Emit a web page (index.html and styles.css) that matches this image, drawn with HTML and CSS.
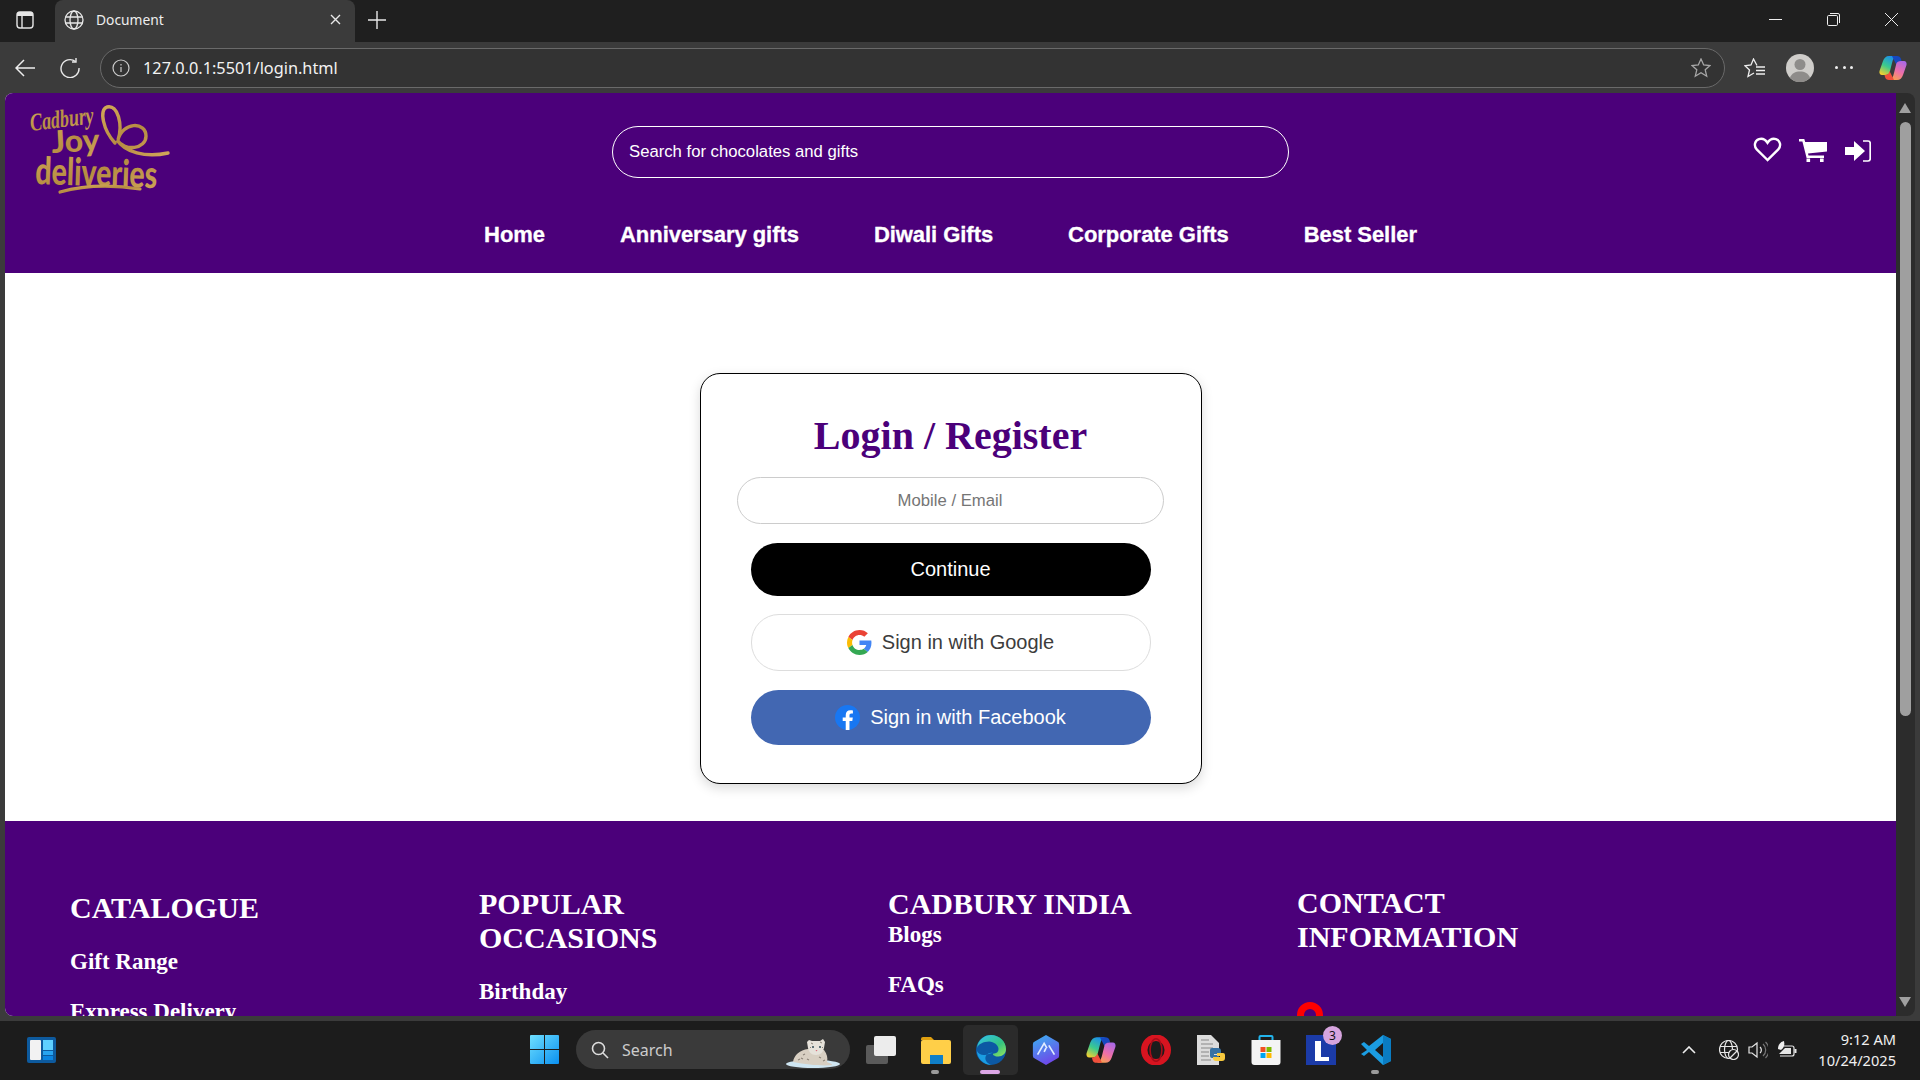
FILE: index.html
```html
<!DOCTYPE html>
<html lang="en">
<head>
    <meta charset="UTF-8">
    <meta name="viewport" content="width=device-width, initial-scale=1.0">
    <title>Document</title>
    <link rel="stylesheet" href="styles.css">
</head>
<body>

    <!-- browser tabs -->
    <div class="tabstrip">
        <svg class="tab-side" viewBox="0 0 18 18"><rect x="1" y="1" width="16" height="16" rx="3" fill="none" stroke="#e6e6e6" stroke-width="1.4"/><path d="M1 4a3 3 0 0 1 3-3h10a3 3 0 0 1 3 3v1H1z" fill="#e6e6e6"/><path d="M6 5v12" stroke="#e6e6e6" stroke-width="1.4"/></svg>
        <div class="tab">
            <svg class="tab-globe" viewBox="0 0 20 20" fill="none" stroke="#e8e8e8" stroke-width="1.3"><circle cx="10" cy="10" r="9"/><ellipse cx="10" cy="10" rx="4" ry="9"/><path d="M1.5 7h17M1.5 13h17"/></svg>
            <span class="tab-title">Document</span>
            <svg class="tab-close" viewBox="0 0 11 11" stroke="#e8e8e8" stroke-width="1.4"><path d="M1 1l9 9M10 1l-9 9"/></svg>
        </div>
        <svg class="tab-new" viewBox="0 0 18 18" stroke="#e8e8e8" stroke-width="1.4"><path d="M9 0v18M0 9h18"/></svg>
        <div class="window-btns">
            <svg class="win-min" viewBox="0 0 13 1"><path d="M0 .5h13" stroke="#eee"/></svg>
            <svg class="win-max" viewBox="0 0 13 13" fill="none" stroke="#eee"><rect x=".5" y="2.5" width="10" height="10" rx="1.2"/><path d="M3 .5h8a1.5 1.5 0 0 1 1.5 1.5v8"/></svg>
            <svg class="win-close" viewBox="0 0 13 13" stroke="#eee"><path d="M0 0l13 13M13 0L0 13"/></svg>
        </div>
    </div>

    <!-- address bar -->
    <div class="toolbar">
        <svg class="tool-back" viewBox="0 0 20 18" fill="none" stroke="#eee" stroke-width="1.5"><path d="M20 9H1M9 1L1 9l8 8"/></svg>
        <svg class="tool-reload" viewBox="0 0 20 20" fill="none" stroke="#e8e8e8" stroke-width="1.4"><path d="M15.5 3.5A9 9 0 1 0 19 10"/><path d="M16 0v4h-4"/></svg>
        <div class="address">
            <svg class="addr-info" viewBox="0 0 18 18" fill="none" stroke="#ccc" stroke-width="1.2"><circle cx="9" cy="9" r="8"/><path d="M9 8v5M9 5v1.4"/></svg>
            <span class="addr-url">127.0.0.1:5501/login.html</span>
            <svg class="addr-star" viewBox="0 0 20 20" fill="none" stroke="#a8a8a8" stroke-width="1.3"><path d="M10 1l2.7 6 6.3.6-4.8 4.2 1.5 6.4-5.7-3.4-5.7 3.4 1.5-6.4L1 7.6 7.300 7z"/></svg>
        </div>
        <svg class="tool-fav" viewBox="0 0 21 20" fill="none" stroke="#eee" stroke-width="1.3"><path d="M13 7.500L9.500 1 7 7l-6 .8 4.500 4.200L4 18.500l6-3.500"/><path d="M12 9h9M12 12.500h9M12 16h9"/></svg>
        <svg class="tool-avatar" viewBox="0 0 28 28"><circle cx="14" cy="14" r="14" fill="#cfcdca"/><circle cx="14" cy="10.500" r="5.500" fill="#8e8c8a"/><path d="M4 24c1.500-5 5.500-6.500 10-6.500S22.500 19 24 24a14 14 0 0 1-20 0z" fill="#8e8c8a"/></svg>
        <span class="tool-dots"><i></i><i></i><i></i></span>
        <svg class="tool-copilot" viewBox="0 0 28 26">
            <defs>
                <linearGradient id="copA" x1=".7" y1="0" x2=".2" y2="1"><stop offset="0" stop-color="#1a8cf0"/><stop offset=".55" stop-color="#3ccb8c"/><stop offset="1" stop-color="#f4d030"/></linearGradient>
                <linearGradient id="copB" x1=".8" y1="0" x2=".3" y2="1"><stop offset="0" stop-color="#a868e8"/><stop offset=".55" stop-color="#ee6fa8"/><stop offset="1" stop-color="#f8a050"/></linearGradient>
            </defs>
            <path d="M10 1h8C15 2 14 4 13 8l-2 8c-.5 3-2 4-5 4H3c-2 0-3-2-2.500-4L4 6c1-3 3-5 6-5z" fill="url(#copA)"/>
            <path d="M13 1h5c2 0 3.500 1 4 3l.5 2c-3 0-4.500 1-5 4z" fill="#1648c0"/>
            <path d="M18 25h-8c3-1 4-3 5-7l2-8c.5-3 2-4 5-4h3c2 0 3 2 2.500 4L24 20c-1 3-3 5-6 5z" fill="url(#copB)"/>
            <path d="M15 25h-5c-2 0-3.500-1-4-3L5.500 20c3 0 4.500-1 5-4z" fill="#f0503c"/>
        </svg>
    </div>

    <div class="browser-body">
        <div class="page">

            <header class="site-header">
                <div class="header-top">
                    <!-- coordinates are px from the corner of the window, y less 90 -->
                    <svg class="logo" viewBox="30 15 142 90">
                        <defs>
                            <linearGradient id="gold" x1="0" y1="0" x2="1" y2="1"><stop offset="0" stop-color="#d2a857"/><stop offset=".5" stop-color="#b68c42"/><stop offset="1" stop-color="#d0a65a"/></linearGradient>
                        </defs>
                        <text x="31" y="41" class="logo-cad" textLength="64" lengthAdjust="spacingAndGlyphs" transform="rotate(-7 31 41)">Cadbury</text>
                        <text x="52" y="63" class="logo-joy" textLength="48" lengthAdjust="spacingAndGlyphs" transform="rotate(-3 52 63)">Joy</text>
                        <text x="35" y="94" class="logo-del" textLength="122" lengthAdjust="spacingAndGlyphs" transform="rotate(2 35 94)">deliveries</text>
                        <g fill="none" stroke="url(#gold)" stroke-linecap="round">
                            <path d="M115 53C103 40 99 20 107 17C118 14 123 35 118 50C122 32 146 31 146 46C146 59 125 62 117 50C125 62 145 68 168 63" stroke-width="3.400"/>
                            <path d="M60 102C85 95 115 95 140 99" stroke-width="3.200"/>
                        </g>
                    </svg>
                    <input class="search" type="text" placeholder="Search for chocolates and gifts">
                    <div class="header-icons">
                        <svg class="icon-heart" viewBox="0 0 29 25" fill="none" stroke="#fff" stroke-width="2.400"><path d="M14.500 23L3.700 12.300C.7 9.200 1.500 3.500 6 2.100c3.200-.9 6.500.6 8.500 3.700 2-3.100 5.300-4.600 8.500-3.700 4.500 1.400 5.300 7.100 2.300 10.200z"/></svg>
                        <svg class="icon-cart" viewBox="0 0 28 23" fill="#fff"><path d="M0 0h5.300l.9 3H28v9.500L9 14.500l.5 2H25V19H7.600L3.400 2.500H0z"/><rect x="7.500" y="19.500" width="3.600" height="3.500"/><rect x="21" y="19.500" width="3.600" height="3.500"/></svg>
                        <svg class="icon-signin" viewBox="0 0 26 22"><path d="M0 7h9V1l11 10L9 21v-6H0z" fill="#fff"/><path d="M18 1h5a2.200 2.200 0 0 1 2.200 2.200v15.600A2.200 2.200 0 0 1 23 21h-5" fill="none" stroke="#fff" stroke-width="1.700"/></svg>
                    </div>
                </div>
                <nav class="site-nav">
                    <a href="#">Home</a>
                    <a href="#">Anniversary gifts</a>
                    <a href="#">Diwali Gifts</a>
                    <a href="#">Corporate Gifts</a>
                    <a href="#">Best Seller</a>
                </nav>
            </header>

            <main class="login-area">
                <form class="login-card">
                    <h2>Login / Register</h2>
                    <input class="login-input" type="text" placeholder="Mobile / Email">
                    <button class="btn btn-continue" type="button">Continue</button>
                    <button class="btn btn-google" type="button">
                        <svg class="btn-icon" viewBox="0 0 48 48">
                            <path fill="#EA4335" d="M24 9.500c3.540 0 6.710 1.220 9.210 3.600l6.850-6.850C35.900 2.380 30.470 0 24 0 14.620 0 6.510 5.380 2.560 13.220l7.980 6.190C12.430 13.720 17.740 9.500 24 9.500z"/>
                            <path fill="#4285F4" d="M46.980 24.550c0-1.570-.15-3.090-.38-4.550H24v9.020h12.940c-.58 2.960-2.260 5.480-4.780 7.180l7.730 6c4.510-4.180 7.090-10.360 7.090-17.650z"/>
                            <path fill="#FBBC05" d="M10.530 28.590c-.48-1.450-.76-2.990-.76-4.590s.27-3.140.76-4.590l-7.980-6.190C.92 16.460 0 20.120 0 24c0 3.880.92 7.540 2.560 10.780l7.970-6.190z"/>
                            <path fill="#34A853" d="M24 48c6.480 0 11.930-2.130 15.890-5.810l-7.730-6c-2.150 1.450-4.920 2.300-8.160 2.300-6.260 0-11.570-4.220-13.470-9.910l-7.980 6.190C6.510 42.620 14.620 48 24 48z"/>
                        </svg>
                        Sign in with Google
                    </button>
                    <button class="btn btn-facebook" type="button">
                        <svg class="btn-icon" viewBox="0 0 24 24"><circle cx="12" cy="12" r="12" fill="#1877f2"/><path d="M16.600 15.300l.5-3.300h-3.200V9.900c0-.9.400-1.800 1.900-1.800h1.400V5.300s-1.300-.2-2.600-.2c-2.600 0-4.300 1.600-4.300 4.400V12H7.400v3.300h2.900V24h3.600v-8.700z" fill="#fff"/></svg>
                        Sign in with Facebook
                    </button>
                </form>
            </main>

            <footer class="site-footer">
                <div class="footer-col col-catalogue">
                    <h3>CATALOGUE</h3>
                    <a href="#">Gift Range</a>
                    <a href="#">Express Delivery</a>
                </div>
                <div class="footer-col col-occasions">
                    <h3>POPULAR OCCASIONS</h3>
                    <a href="#">Birthday</a>
                </div>
                <div class="footer-col col-india">
                    <h3>CADBURY INDIA</h3>
                    <a href="#">Blogs</a>
                    <a href="#">FAQs</a>
                </div>
                <div class="footer-col col-contact">
                    <h3>CONTACT INFORMATION</h3>
                    <svg class="contact-pin" viewBox="0 0 26 26" fill="none" stroke="#f00" stroke-width="7"><circle cx="13" cy="13" r="9.500"/></svg>
                </div>
            </footer>

        </div>
        <div class="scrollbar">
            <span class="scroll-up"></span>
            <span class="scroll-thumb"></span>
            <span class="scroll-down"></span>
        </div>
    </div>

    <!-- windows taskbar -->
    <div class="taskbar">
        <svg class="task-widget" viewBox="0 0 29 26"><rect width="29" height="26" rx="2" fill="#0d5a9e"/><rect x="3" y="3" width="11" height="20" rx="1" fill="#f2f2f2"/><rect x="16" y="3" width="10" height="10" fill="#5fd0ff"/><rect x="16" y="14" width="10" height="4" fill="#27a4f0"/><rect x="16" y="19" width="10" height="4" fill="#0a84e0"/></svg>
        <svg class="task-start" viewBox="0 0 29 29"><defs><linearGradient id="winG" x1="0" y1="0" x2="1" y2="1"><stop offset="0" stop-color="#6fe0ff"/><stop offset="1" stop-color="#0a90f0"/></linearGradient></defs><path d="M1 0h13v14H0V1a1 1 0 0 1 1-1zM15 0h13a1 1 0 0 1 1 1v13H15zM0 15h14v14H1a1 1 0 0 1-1-1zM15 15h14v13a1 1 0 0 1-1 1H15z" fill="url(#winG)"/></svg>
        <div class="task-search">
            <svg class="task-search-icon" viewBox="0 0 18 18" fill="none" stroke="#ddd" stroke-width="1.600"><circle cx="7.500" cy="7.500" r="6"/><path d="M12 12l5 5"/></svg>
            <span>Search</span>
            <svg class="task-leopard" viewBox="0 0 56 32">
                <ellipse cx="28" cy="27" rx="27" ry="4" fill="#cfe6f2"/>
                <path d="M8 25c1-7 7-12 15-13l16 1c3 4 4 8 3 12 2 1 6 2 5 3-8 1-24 0-39-3z" fill="#d8cfc2"/>
                <path d="M13 23l2-1M18 18l2-1M16 21l2 1M34 20l2 1M38 24l2-1M22 22l2 1" stroke="#8d8478" stroke-width="1.200"/>
                <path d="M24 3l3 1h8l3-2 2 3-1 6c-1 4-3 7-8 7s-7-3-8-7l-1-6z" fill="#e6e2da"/>
                <path d="M26 6l2 1M35 5l2 1M25 10l1 1M38 10l-1 1" stroke="#8d8478" stroke-width="1"/>
                <circle cx="28" cy="10" r="1.100" fill="#3c5560"/><circle cx="35" cy="10" r="1.100" fill="#3c5560"/>
                <path d="M30.500 13h2l-1 1.500z" fill="#d86a78"/>
            </svg>
        </div>
        <div class="task-apps">
            <div class="task-app"><svg viewBox="0 0 30 28"><rect x="0" y="9" width="22" height="19" rx="2" fill="#5a5a5a"/><rect x="8" y="0" width="22" height="20" rx="2" fill="#ececec"/></svg></div>
            <div class="task-app app-running"><svg viewBox="0 0 30 28"><path d="M0 3a2 2 0 0 1 2-2h8l3 3h-13z" fill="#e0a010"/><rect x="0" y="4" width="30" height="24" rx="2" fill="#ffcf48"/><rect x="9" y="19" width="13" height="9" fill="#0f7fc8"/></svg></div>
            <div class="task-app app-active"><svg viewBox="0 0 32 32"><defs><linearGradient id="edgeG" x1="0" y1="0" x2="1" y2="1"><stop offset="0" stop-color="#35c1f1"/><stop offset=".6" stop-color="#33c481"/><stop offset="1" stop-color="#9ae65c"/></linearGradient></defs><circle cx="16" cy="16" r="16" fill="#0c59a4"/><path d="M1 14C2 5 9 0 16 0c9 0 16 7 16 15 0 5-4 8-8 8-3 0-6-1-6-3 4 0 6-2 6-5 0-4-5-8-10-8-6 0-12 3-13 7z" fill="url(#edgeG)"/><path d="M18 19c-5 0-8 2-8 6 0 3 3 6 7 7-9 0-16-7-16-15 2 4 6 5 10 4z" fill="#1b9de2"/></svg></div>
            <div class="task-app"><svg viewBox="0 0 28 32"><defs><linearGradient id="aimG" x1=".3" y1="0" x2=".7" y2="1"><stop offset="0" stop-color="#3fa8f0"/><stop offset="1" stop-color="#7240e8"/></linearGradient></defs><path d="M14 0l12 7a3 3 0 0 1 2 3v12a3 3 0 0 1-2 3l-12 7-12-7a3 3 0 0 1-2-3V10a3 3 0 0 1 2-3z" fill="url(#aimG)"/><path d="M5 21l7-12 3 5M17 11l6 10M12 18l2-4" fill="none" stroke="#e0ecff" stroke-width="1.800"/></svg></div>
            <div class="task-app"><svg viewBox="0 0 28 26"><path d="M10 1h8C15 2 14 4 13 8l-2 8c-.5 3-2 4-5 4H3c-2 0-3-2-2.500-4L4 6c1-3 3-5 6-5z" fill="url(#copA)"/><path d="M13 1h5c2 0 3.500 1 4 3l.5 2c-3 0-4.500 1-5 4z" fill="#1648c0"/><path d="M18 25h-8c3-1 4-3 5-7l2-8c.5-3 2-4 5-4h3c2 0 3 2 2.500 4L24 20c-1 3-3 5-6 5z" fill="url(#copB)"/><path d="M15 25h-5c-2 0-3.500-1-4-3L5.500 20c3 0 4.500-1 5-4z" fill="#f0503c"/></svg></div>
            <div class="task-app"><svg viewBox="0 0 28 28"><ellipse cx="14" cy="14" rx="11" ry="11.500" fill="none" stroke="#d81420" stroke-width="6"/><ellipse cx="14" cy="14" rx="5.500" ry="10.500" fill="none" stroke="#a80c18" stroke-width="1.500"/></svg></div>
            <div class="task-app"><svg viewBox="0 0 28 30"><path d="M0 0h14l8 8v22H0z" fill="#dcdcdc"/><path d="M4 5h8M4 9h12M4 13h12M4 17h8M4 21h8M4 25h10" stroke="#888" stroke-width="1.200"/><path d="M15 13h6a3 3 0 0 1 3 3v3h-7v1h5v3h-7a2 2 0 0 1-2-2v-6a2 2 0 0 1 2-2z" fill="#3772a4"/><path d="M28 20v3a3 3 0 0 1-3 3h-6a3 3 0 0 1-3-3v-1h7v-1h-3v-3h6a2 2 0 0 1 2 2z" fill="#f7c93e"/></svg></div>
            <div class="task-app"><svg viewBox="0 0 29 30"><path d="M8 6V2a1 1 0 0 1 1-1h11a1 1 0 0 1 1 1v4" fill="none" stroke="#22b4ec" stroke-width="2"/><path d="M0 5h29v22a3 3 0 0 1-3 3H3a3 3 0 0 1-3-3z" fill="#f4f4f4"/><rect x="9" y="12" width="5" height="5" fill="#f25022"/><rect x="15" y="12" width="5" height="5" fill="#7fba00"/><rect x="9" y="18" width="5" height="5" fill="#00a4ef"/><rect x="15" y="18" width="5" height="5" fill="#ffb900"/></svg></div>
            <div class="task-app app-badged"><svg viewBox="0 0 30 30"><rect width="30" height="30" fill="#1b3ba8"/><path d="M9 6h6v16h8v4H9z" fill="#fff"/></svg><span class="task-badge">3</span></div>
            <div class="task-app app-running"><svg viewBox="0 0 30 30"><path d="M22 0l8 4v22l-8 4L8 17l-5 4-3-2 6-4-6-6 3-2 5 4zm0 8l-8 7 8 7z" fill="#1b9de2"/><path d="M22 0l8 4v22l-8 4z" fill="#0a7cc2"/></svg></div>
        </div>
        <div class="tray">
            <svg class="tray-chevron" viewBox="0 0 14 8" fill="none" stroke="#eee" stroke-width="1.600"><path d="M1 7l6-6 6 6"/></svg>
            <svg class="tray-icon" viewBox="0 0 20 20" fill="none" stroke="#e6e6e6" stroke-width="1.200"><circle cx="9.500" cy="9.500" r="9"/><ellipse cx="9.500" cy="9.500" rx="4" ry="9"/><path d="M1 6.500h17M1 12.500h17"/><circle cx="14.500" cy="14.500" r="5" fill="#1c1c1c"/><path d="M11 18l7-7"/></svg>
            <svg class="tray-icon" viewBox="0 0 20 20" fill="none" stroke="#e6e6e6" stroke-width="1.200"><path d="M1 7v6h3l5 4V3L4 7z"/><path d="M12 7a4 4 0 0 1 0 6"/><path d="M15 4a8 8 0 0 1 0 12M17.500 2a11 11 0 0 1 0 16" stroke="#777"/></svg>
            <svg class="tray-icon" viewBox="0 0 20 20"><path d="M1 9c0-4 2-7 6-8 1 4 0 7-3 9z" fill="#eee"/><path d="M7 6h8a2 2 0 0 1 2 2v6a2 2 0 0 1-2 2H3" fill="none" stroke="#e6e6e6" stroke-width="1.200"/><path d="M8 8h6v6H2z" fill="#e6e6e6"/><path d="M17.500 9h2v4h-2" fill="#e6e6e6"/></svg>
            <div class="tray-clock"><span>9:12 AM</span><span>10/24/2025</span></div>
        </div>
    </div>

</body>
</html>
```

FILE: styles.css
```css
body {
    margin: 0;
    width: 1920px;
    height: 1080px;
    overflow: hidden;
    display: flex;
    flex-direction: column;
    background-color: #3b3b3b;
    font-family: "Liberation Sans", Arial, sans-serif;
}

svg {
    display: block;
    flex-shrink: 0;
}

/* browser tabs */
.tabstrip {
    height: 42px;
    display: flex;
    align-items: center;
    background-color: #1f1f1f;
}

.tab-side {
    width: 18px;
    height: 18px;
    margin: 0 0 3px 16px;
}

.tab {
    width: 300px;
    height: 42px;
    margin-left: 21px;
    padding: 0 14px 3px 9px;
    box-sizing: border-box;
    display: flex;
    align-items: center;
    background-color: #3b3b3b;
    border-radius: 8px 8px 0 0;
}

.tab-globe {
    width: 20px;
    height: 20px;
}

.tab-title {
    margin-left: 12px;
    flex: 1;
    color: #eee;
    font-family: "Noto Sans", sans-serif;
    font-size: 13.8px;
}

.tab-close {
    width: 11px;
    height: 11px;
}

.tab-new {
    width: 18px;
    height: 18px;
    margin: 0 0 3px 13px;
}

.window-btns {
    margin: 0 0 3px auto;
    display: flex;
    align-items: center;
}

.win-min {
    width: 13px;
    height: 1px;
    margin-right: 45px;
}

.win-max {
    width: 13px;
    height: 13px;
    margin-right: 45px;
}

.win-close {
    width: 13px;
    height: 13px;
    margin-right: 22px;
}

/* address bar */
.toolbar {
    height: 51px;
    display: flex;
    align-items: center;
    background-color: #3b3b3b;
}

.tool-back {
    width: 20px;
    height: 18px;
    margin-left: 15px;
}

.tool-reload {
    width: 20px;
    height: 20px;
    margin-left: 25px;
}

.address {
    width: 1625px;
    height: 40px;
    margin-left: 20px;
    padding: 0 13px 0 11px;
    box-sizing: border-box;
    display: flex;
    align-items: center;
    background-color: #333;
    border: 1px solid #6a6a6a;
    border-radius: 20px;
}

.addr-info {
    width: 18px;
    height: 18px;
}

.addr-url {
    margin-left: 13px;
    flex: 1;
    color: #f2f2f2;
    font-family: "Noto Sans", sans-serif;
    font-size: 16.3px;
}

.addr-star {
    width: 20px;
    height: 20px;
}

.tool-fav {
    width: 21px;
    height: 20px;
    margin-left: 19px;
}

.tool-avatar {
    width: 28px;
    height: 28px;
    margin-left: 21px;
}

.tool-dots {
    width: 18px;
    margin-left: 21px;
    display: flex;
    justify-content: space-between;
}

.tool-dots i {
    width: 3px;
    height: 3px;
    background-color: #eee;
    border-radius: 50%;
}

.tool-copilot {
    width: 28px;
    height: 26px;
    margin-left: 26px;
}

/* page inside the browser */
.browser-body {
    height: 923px;
    margin: 0 5px;
    display: flex;
}

.page {
    flex: 1;
    overflow: hidden;
    background-color: #fff;
    border-radius: 8px 0 0 8px;
}

.scrollbar {
    width: 19px;
    position: relative;
    background-color: #2c2c2c;
    border-radius: 0 8px 8px 0;
}

.scroll-up,
.scroll-down,
.scroll-thumb {
    position: absolute;
}

.scroll-up {
    top: 10px;
    left: 3px;
    border: solid transparent;
    border-width: 0 6.5px 10px;
    border-bottom-color: #a0a0a0;
}

.scroll-thumb {
    top: 29px;
    left: 4px;
    width: 11px;
    height: 594px;
    background-color: #9f9f9f;
    border-radius: 6px;
}

.scroll-down {
    bottom: 9px;
    left: 3px;
    border: solid transparent;
    border-width: 10px 6.5px 0;
    border-top-color: #a0a0a0;
}

.site-header {
    height: 180px;
    background-color: #4b007a;
}

.header-top {
    height: 107px;
    padding: 12px 25px 0;
    box-sizing: border-box;
    display: grid;
    grid-template-columns: 1fr 677px 1fr;
    align-items: start;
}

.logo {
    width: 142px;
    height: 90px;
    overflow: visible;
}

.logo-cad,
.logo-joy,
.logo-del {
    fill: url(#gold);
    font-weight: bold;
}

.logo-cad {
    font-family: "Liberation Serif", serif;
    font-style: italic;
    font-size: 25px;
}

.logo-joy {
    font-family: Lato, sans-serif;
    font-size: 31px;
    font-weight: 900;
}

.logo-del {
    font-family: Lato, sans-serif;
    font-size: 38px;
    font-weight: 900;
}

.search {
    height: 52px;
    margin-top: 21px;
    padding: 0 16px;
    box-sizing: border-box;
    color: #fff;
    font-family: "Liberation Sans", Arial, sans-serif;
    font-size: 16.7px;
    background: transparent;
    border: 1px solid #fff;
    border-radius: 26px;
    outline: none;
}

.search::placeholder {
    color: #fff;
    opacity: 1;
}

.header-icons {
    margin-top: 32px;
    display: flex;
    justify-content: flex-end;
    align-items: flex-start;
}

.icon-heart {
    width: 29px;
    height: 25px;
    margin-right: 17px;
}

.icon-cart {
    width: 28px;
    height: 23px;
    margin: 2px 18px 0 0;
}

.icon-signin {
    width: 26px;
    height: 22px;
    margin-top: 3px;
}

.site-nav {
    display: flex;
    justify-content: center;
    gap: 75px;
    padding-top: 22px;
}

.site-nav a {
    color: #fff;
    font-size: 22px;
    font-weight: bold;
    letter-spacing: -.05px;
    text-decoration: none;
    -webkit-text-stroke: .3px #fff;
}

/* login form */
.login-area {
    height: 548px;
    padding-top: 100px;
    box-sizing: border-box;
    display: flex;
    justify-content: center;
    align-items: flex-start;
}

.login-card {
    width: 502px;
    height: 411px;
    box-sizing: border-box;
    padding-top: 38px;
    display: flex;
    flex-direction: column;
    align-items: center;
    background-color: #fff;
    border: 1px solid #000;
    border-radius: 20px;
    box-shadow: 0 4px 12px rgba(0, 0, 0, 0.15);
}

.login-card h2 {
    margin: 0 0 18px;
    color: #4b007a;
    font-family: "Liberation Serif", serif;
    font-size: 40px;
    font-weight: bold;
}

.login-input {
    width: 427px;
    height: 47px;
    margin: 0 1px 19px 0;
    box-sizing: border-box;
    font-family: "Liberation Sans", Arial, sans-serif;
    font-size: 16.7px;
    text-align: center;
    border: 1px solid #ccc;
    border-radius: 24px;
    outline: none;
}

.login-input::placeholder {
    color: #757575;
}

.btn {
    width: 400px;
    display: flex;
    justify-content: center;
    align-items: center;
    gap: 10px;
    padding: 0;
    font-family: "Liberation Sans", Arial, sans-serif;
    font-size: 20px;
    border: none;
    border-radius: 28px;
}

.btn-icon {
    width: 25px;
    height: 25px;
}

.btn-continue {
    height: 53px;
    margin-bottom: 18px;
    color: #fff;
    background-color: #000;
}

.btn-google {
    height: 57px;
    margin-bottom: 19px;
    color: #3c3c3c;
    background-color: #fff;
    border: 1px solid #ddd;
}

.btn-facebook {
    height: 55px;
    color: #fff;
    background-color: #4267b2;
}

/* footer, cut off by the window */
.site-footer {
    height: 300px;
    padding-left: 65px;
    display: grid;
    grid-template-columns: repeat(4, 409px);
    color: #fff;
    background-color: #4b007a;
    font-family: "Liberation Serif", serif;
}

.footer-col h3 {
    width: 330px;
    margin: 0 0 24px;
    font-size: 30px;
    font-weight: bold;
}

.footer-col a {
    display: block;
    margin-bottom: 24px;
    color: #fff;
    font-size: 23px;
    font-weight: bold;
    text-decoration: none;
}

.col-catalogue {
    padding-top: 70px;
}

.col-occasions {
    padding-top: 66px;
}

.col-india {
    padding-top: 66px;
}

.col-india h3 {
    margin-bottom: 1px;
}

.col-contact {
    padding-top: 65px;
}

.contact-pin {
    width: 26px;
    height: 26px;
    margin-top: 48px;
}

/* windows taskbar */
.taskbar {
    height: 59px;
    margin-top: 5px;
    padding-bottom: 2px;
    box-sizing: border-box;
    display: flex;
    align-items: center;
    background-color: #1c1c1c;
}

.task-widget {
    width: 29px;
    height: 26px;
    margin-left: 27px;
}

.task-start {
    width: 29px;
    height: 29px;
    margin-left: 474px;
}

.task-search {
    width: 274px;
    height: 39px;
    margin-left: 17px;
    box-sizing: border-box;
    padding: 0 9px 0 15px;
    display: flex;
    align-items: center;
    overflow: hidden;
    color: #ccc;
    font-family: "Noto Sans", sans-serif;
    font-size: 16px;
    background-color: #3a3a3a;
    border-radius: 20px;
}

.task-search-icon {
    width: 18px;
    height: 18px;
    margin-right: 13px;
}

.task-leopard {
    width: 56px;
    height: 32px;
    margin-left: auto;
    margin-top: 6px;
}

.task-apps {
    margin-left: 3px;
    display: flex;
}

.task-app {
    width: 55px;
    height: 50px;
    position: relative;
    display: flex;
    justify-content: center;
    align-items: center;
}

.task-app svg {
    width: 30px;
    height: 30px;
}

.app-running::after,
.app-active::after {
    content: "";
    position: absolute;
    bottom: 1px;
    left: 23px;
    width: 8px;
    height: 4px;
    background-color: #9a9a9a;
    border-radius: 2px;
}

.app-active {
    background-color: #2b2b2b;
    border-radius: 5px;
}

.app-active::after {
    left: 17px;
    width: 20px;
    background-color: #dca6e6;
}

.task-badge {
    position: absolute;
    top: 1px;
    right: 6px;
    width: 19px;
    height: 19px;
    color: #111;
    font-family: "Noto Sans", sans-serif;
    font-size: 12px;
    line-height: 19px;
    text-align: center;
    background-color: #d6a4de;
    border-radius: 50%;
}

.tray {
    margin-left: auto;
    padding-right: 24px;
    display: flex;
    align-items: center;
}

.tray-chevron {
    width: 14px;
    height: 8px;
    margin-right: 23px;
}

.tray-icon {
    width: 20px;
    height: 20px;
    margin-right: 9px;
}

.tray-clock {
    margin-left: 12px;
    display: flex;
    flex-direction: column;
    align-items: flex-end;
    color: #f0f0f0;
    font-family: "Noto Sans", sans-serif;
    font-size: 14.6px;
    line-height: 21px;
}
```
